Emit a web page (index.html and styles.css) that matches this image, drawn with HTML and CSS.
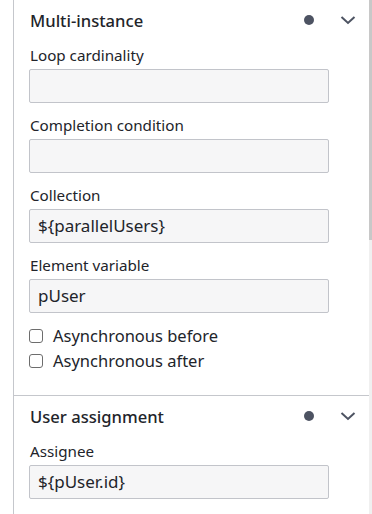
FILE: index.html
```html
<!DOCTYPE html>
<html lang="en">
<head>
  <meta charset="UTF-8">
  <meta name="viewport" content="width=device-width, initial-scale=1.0">
  <title>Properties Panel</title>
  <link rel="stylesheet" href="styles.css">
</head>
<body>
  <div class="panel">
    <div class="groups">
      <div class="group">
        <div class="group-header">
          <span class="group-title">Multi-instance</span>
          <span class="dot"></span>
          <svg class="chevron" width="16" height="16" viewBox="0 0 16 16"><path d="M1.5 5 8 11 14.5 5" fill="none" stroke="#4d5362" stroke-width="2"/></svg>
        </div>
        <div class="entries">
          <div class="field">
            <label>Loop cardinality</label>
            <div class="input"></div>
          </div>
          <div class="field">
            <label>Completion condition</label>
            <div class="input"></div>
          </div>
          <div class="field">
            <label>Collection</label>
            <div class="input">${parallelUsers}</div>
          </div>
          <div class="field">
            <label>Element variable</label>
            <div class="input">pUser</div>
          </div>
          <div class="checks">
            <div class="check"><span class="box"></span>Asynchronous before</div>
            <div class="check"><span class="box"></span>Asynchronous after</div>
          </div>
        </div>
      </div>
      <div class="group">
        <div class="group-header">
          <span class="group-title">User assignment</span>
          <span class="dot"></span>
          <svg class="chevron" width="16" height="16" viewBox="0 0 16 16"><path d="M1.5 5 8 11 14.5 5" fill="none" stroke="#4d5362" stroke-width="2"/></svg>
        </div>
        <div class="entries">
          <div class="field">
            <label>Assignee</label>
            <div class="input">${pUser.id}</div>
          </div>
        </div>
      </div>
    </div>
    <div class="scrollbar"><div class="thumb"></div></div>
  </div>
</body>
</html>
```

FILE: styles.css
```css
html, body {
  margin: 0;
  height: 514px;
  overflow: hidden;
  background: #fff;
}
body {
  font-family: "Noto Sans", sans-serif;
  color: #22242a;
}
.panel {
  display: flex;
  height: 514px;
}
.groups {
  flex: 1;
  margin-left: 13px;
  border-left: 1px solid #c5c7cc;
}
.group + .group {
  border-top: 1px solid #c5c7cc;
}
.group-header {
  display: flex;
  align-items: center;
  height: 40px;
  padding-left: 16px;
}
.group-title {
  flex: 1;
  font-size: 16.6px;
  font-weight: 500;
}
.dot {
  width: 10px;
  height: 10px;
  border-radius: 50%;
  background: #4d5362;
  margin-right: 26px;
}
.chevron {
  margin-right: 13px;
}
.entries {
  padding: 4px 0 0 15px;
}
.field {
  margin-bottom: 11px;
}
.field label {
  display: block;
  font-size: 15.2px;
  line-height: 22px;
  margin: 0 0 3px 1px;
}
.input {
  box-sizing: border-box;
  width: 300px;
  height: 34px;
  border: 1px solid #c2c4ca;
  border-radius: 2px;
  background: #f6f6f7;
  padding: 0 8px;
  font-size: 17px;
  line-height: 32px;
}
.checks {
  margin-top: -1px;
  padding-bottom: 22px;
}
.check {
  display: flex;
  align-items: center;
  height: 25px;
  font-size: 16.5px;
}
.box {
  box-sizing: border-box;
  width: 14px;
  height: 14px;
  border: 1.5px solid #6d6d6d;
  border-radius: 3px;
  margin-right: 10px;
}
.scrollbar {
  width: 3px;
  background: #f0f0f0;
}
.thumb {
  height: 240px;
  background: #c8c8c8;
}
```
